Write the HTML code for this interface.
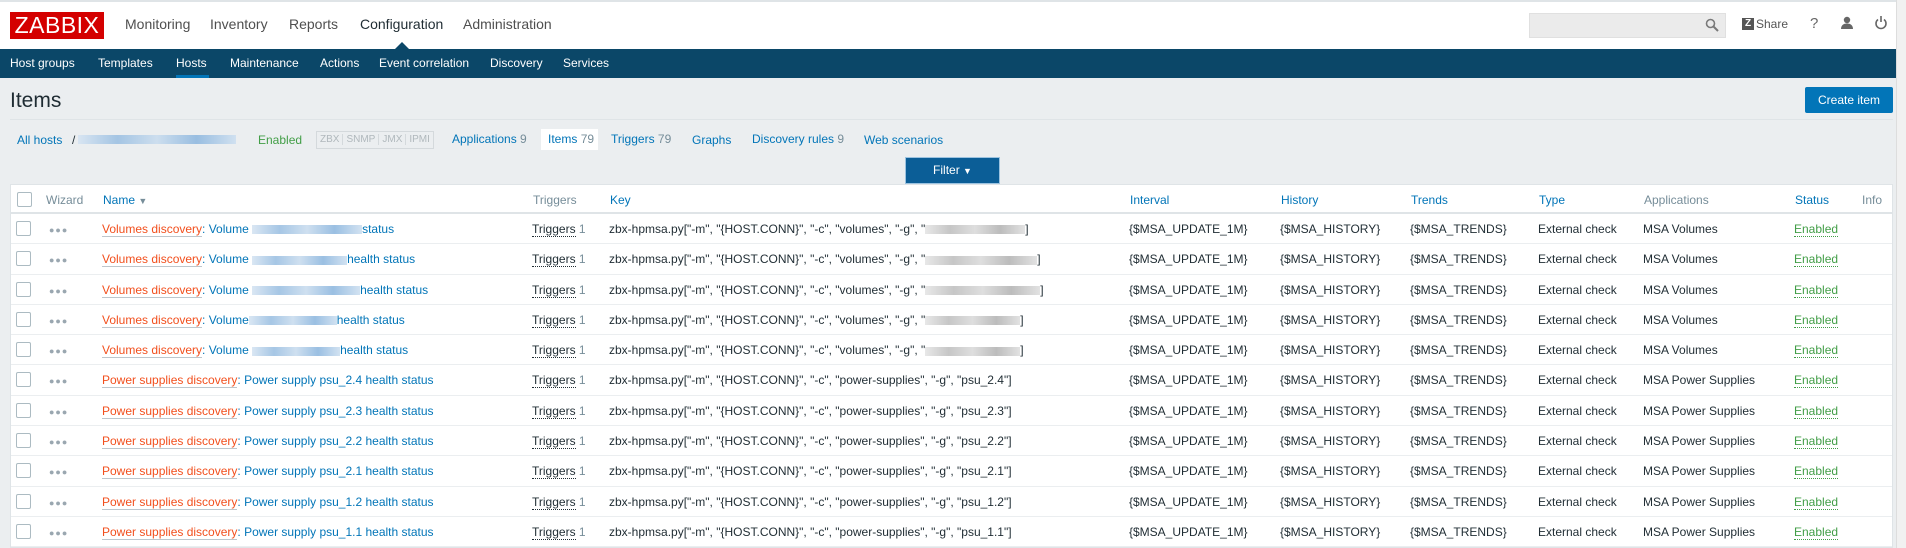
<!DOCTYPE html>
<html><head><meta charset="utf-8"><style>
*{margin:0;padding:0;box-sizing:border-box}
body{width:1906px;height:548px;overflow:hidden;background:#ebeef0;font-family:"Liberation Sans",Arial,sans-serif;font-size:12px;color:#1f2c33;position:relative}
.a{position:absolute;white-space:nowrap}
.top{position:absolute;left:0;top:0;width:1896px;height:49px;background:#fff;border-top:2px solid #dfe4e7}
.logo{left:10px;top:12px;width:94px;height:27px;background:#d40000;color:#fff;font-size:23px;line-height:27px;text-align:center;letter-spacing:.5px}
.tm{top:16px;font-size:14px;color:#4f4f4f}
.sub{position:absolute;left:0;top:49px;width:1896px;height:29px;background:#0b4768}
.sm{top:56px;color:#fff;font-size:12px}
.blue{color:#0275b8}
.gray{color:#768d99}
.tbl{position:absolute;left:10px;top:184px;width:1883px;height:364px;background:#fff;border:1px solid #dfe4e7}
.hr{position:absolute;left:0;width:1881px;border-bottom:1px solid #ebeef0}
.cb{width:15px;height:15px;border:1px solid #acbbc2;border-radius:2px;background:#fff}
.dots{color:#9aa7b0;font-size:9px;letter-spacing:1px;top:11px !important}
.or{color:#f24f1d;border-bottom:1px solid #bdc6cc}
.tr{border-bottom:1px dotted #1f2c33}
.en{color:#429e47;border-bottom:1px dotted #429e47}
.blur{display:inline-block;height:9px;vertical-align:middle;background:linear-gradient(90deg,#d6e4f2,#9cc0e2,#c9dcee,#8fb8df,#cddff0);opacity:.9}
.blurg{display:inline-block;height:9px;vertical-align:middle;background:linear-gradient(90deg,#e8e8e8,#c6c6c6,#dedede,#bcbcbc,#e2e2e2)}
</style></head><body>
<div class="top"></div>
<div class="a logo">ZABBIX</div>
<div class="a tm" style="left:125px">Monitoring</div>
<div class="a tm" style="left:210px">Inventory</div>
<div class="a tm" style="left:289px">Reports</div>
<div class="a tm" style="left:360px;color:#1f2c33">Configuration</div>
<div class="a tm" style="left:463px">Administration</div>
<div class="a" style="left:395px;top:42px;width:0;height:0;border-left:7px solid transparent;border-right:7px solid transparent;border-bottom:7px solid #0b4768"></div>
<div class="a" style="left:1529px;top:13px;width:197px;height:25px;background:#ebebeb;border:1px solid #e0e0e0"></div>
<svg class="a" style="left:1705px;top:18px" width="14" height="14" viewBox="0 0 14 14"><circle cx="5.5" cy="5.5" r="4" fill="none" stroke="#7a7a7a" stroke-width="1.6"/><path d="M8.5 8.5L13 13" stroke="#7a7a7a" stroke-width="2"/></svg>
<div class="a" style="left:1742px;top:18px;width:12px;height:12px;background:#555;color:#fff;font-size:10px;font-weight:bold;line-height:12px;text-align:center">Z</div>
<div class="a" style="left:1756px;top:17px;color:#555;font-size:12px">Share</div>
<div class="a" style="left:1810px;top:15px;color:#666;font-size:15px">?</div>
<svg class="a" style="left:1840px;top:16px" width="14" height="14" viewBox="0 0 14 14"><circle cx="7" cy="4" r="3.2" fill="#666"/><path d="M1 13c0-4 3-5.5 6-5.5s6 1.5 6 5.5z" fill="#666"/></svg>
<svg class="a" style="left:1874px;top:15px" width="14" height="15" viewBox="0 0 14 15"><path d="M4 4.5A5 5 0 1 0 10 4.5" fill="none" stroke="#666" stroke-width="1.6"/><path d="M7 1v6" stroke="#666" stroke-width="1.6"/></svg>
<div class="a" style="left:1896px;top:0;width:10px;height:548px;background:#f1f1f1;border-left:1px solid #ddd"></div>
<div class="sub"></div>
<div class="a sm" style="left:10px">Host groups</div>
<div class="a sm" style="left:98px">Templates</div>
<div class="a sm" style="left:176px">Hosts</div>
<div class="a" style="left:176px;top:75px;width:33px;height:3px;background:#0275b8"></div>
<div class="a sm" style="left:230px">Maintenance</div>
<div class="a sm" style="left:320px">Actions</div>
<div class="a sm" style="left:379px">Event correlation</div>
<div class="a sm" style="left:490px">Discovery</div>
<div class="a sm" style="left:563px">Services</div>
<div class="a" style="left:10px;top:89px;font-size:21px;color:#1f2c33">Items</div>
<div class="a" style="left:1805px;top:87px;width:88px;height:26px;background:#0275b8;color:#fff;border-radius:2px;text-align:center;line-height:26px">Create item</div>
<div class="a" style="left:10px;top:119px;width:1883px;height:1px;background:#dfe4e7"></div>
<div class="a blue" style="left:17px;top:133px">All hosts</div>
<div class="a" style="left:72px;top:133px">/</div>
<div class="a blur" style="left:78px;top:135px;width:158px"></div>
<div class="a" style="left:258px;top:133px;color:#429e47">Enabled</div>
<div class="a" style="left:316px;top:131px;height:18px;border:1px solid #d4d9dc;font-size:10px;color:#b0b8bc;line-height:16px">
<span style="padding:0 3px;border-right:1px solid #d4d9dc">ZBX</span><span style="padding:0 3px;border-right:1px solid #d4d9dc">SNMP</span><span style="padding:0 3px;border-right:1px solid #d4d9dc">JMX</span><span style="padding:0 3px">IPMI</span></div>
<div class="a blue" style="left:452px;top:132px">Applications <span class="gray">9</span></div>
<div class="a" style="left:541px;top:129px;width:57px;height:21px;background:#fff;padding:3px 7px" ><span class="blue">Items</span> <span class="gray">79</span></div>
<div class="a blue" style="left:611px;top:132px">Triggers <span class="gray">79</span></div>
<div class="a blue" style="left:692px;top:133px">Graphs</div>
<div class="a blue" style="left:752px;top:132px">Discovery rules <span class="gray">9</span></div>
<div class="a blue" style="left:864px;top:133px">Web scenarios</div>
<div class="a" style="left:905px;top:157px;width:95px;height:27px;background:#0b5e97;border:1px solid #9cc3e0;color:#fff;text-align:center;line-height:25px;z-index:2">Filter <span style="font-size:9px">▼</span></div>

<div class="tbl">
<div class="hr" style="top:0;height:29px;border-bottom:2px solid #dfe4e7"></div>
<div class="a cb" style="left:6px;top:7px"></div>
<div class="a gray" style="left:35px;top:8px">Wizard</div>
<div class="a blue" style="left:92px;top:8px">Name <span style="font-size:9px;color:#768d99">▼</span></div>
<div class="a gray" style="left:522px;top:8px">Triggers</div>
<div class="a blue" style="left:599px;top:8px">Key</div>
<div class="a blue" style="left:1119px;top:8px">Interval</div>
<div class="a blue" style="left:1270px;top:8px">History</div>
<div class="a blue" style="left:1400px;top:8px">Trends</div>
<div class="a blue" style="left:1528px;top:8px">Type</div>
<div class="a gray" style="left:1633px;top:8px">Applications</div>
<div class="a blue" style="left:1784px;top:8px">Status</div>
<div class="a gray" style="left:1851px;top:8px">Info</div>
</div>
<div class="a" style="left:11px;top:214px;width:1881px">
<div style="position:relative;height:30.3px;border-bottom:1px solid #ebeef0"><div class="a cb" style="left:5px;top:7px"></div><div class="a dots" style="left:38px;top:7px">●●●</div><div class="a" style="left:91px;top:8px"><span class="or">Volumes discovery</span><span class="blue">: Volume <span class="blur" style="width:110px"></span>status</span></div><div class="a" style="left:521px;top:8px"><span class="tr">Triggers</span> <span class="gray">1</span></div><div class="a" style="left:598px;top:8px">zbx-hpmsa.py["-m", "{HOST.CONN}", "-c", "volumes", "-g", "<span class="blurg" style="width:100px"></span>]</div><div class="a" style="left:1118px;top:8px">{$MSA_UPDATE_1M}</div><div class="a" style="left:1269px;top:8px">{$MSA_HISTORY}</div><div class="a" style="left:1399px;top:8px">{$MSA_TRENDS}</div><div class="a" style="left:1527px;top:8px">External check</div><div class="a" style="left:1632px;top:8px">MSA Volumes</div><div class="a en" style="left:1783px;top:8px">Enabled</div></div>
<div style="position:relative;height:30.3px;border-bottom:1px solid #ebeef0"><div class="a cb" style="left:5px;top:7px"></div><div class="a dots" style="left:38px;top:7px">●●●</div><div class="a" style="left:91px;top:8px"><span class="or">Volumes discovery</span><span class="blue">: Volume <span class="blur" style="width:95px"></span>health status</span></div><div class="a" style="left:521px;top:8px"><span class="tr">Triggers</span> <span class="gray">1</span></div><div class="a" style="left:598px;top:8px">zbx-hpmsa.py["-m", "{HOST.CONN}", "-c", "volumes", "-g", "<span class="blurg" style="width:112px"></span>]</div><div class="a" style="left:1118px;top:8px">{$MSA_UPDATE_1M}</div><div class="a" style="left:1269px;top:8px">{$MSA_HISTORY}</div><div class="a" style="left:1399px;top:8px">{$MSA_TRENDS}</div><div class="a" style="left:1527px;top:8px">External check</div><div class="a" style="left:1632px;top:8px">MSA Volumes</div><div class="a en" style="left:1783px;top:8px">Enabled</div></div>
<div style="position:relative;height:30.3px;border-bottom:1px solid #ebeef0"><div class="a cb" style="left:5px;top:7px"></div><div class="a dots" style="left:38px;top:7px">●●●</div><div class="a" style="left:91px;top:8px"><span class="or">Volumes discovery</span><span class="blue">: Volume <span class="blur" style="width:108px"></span>health status</span></div><div class="a" style="left:521px;top:8px"><span class="tr">Triggers</span> <span class="gray">1</span></div><div class="a" style="left:598px;top:8px">zbx-hpmsa.py["-m", "{HOST.CONN}", "-c", "volumes", "-g", "<span class="blurg" style="width:115px"></span>]</div><div class="a" style="left:1118px;top:8px">{$MSA_UPDATE_1M}</div><div class="a" style="left:1269px;top:8px">{$MSA_HISTORY}</div><div class="a" style="left:1399px;top:8px">{$MSA_TRENDS}</div><div class="a" style="left:1527px;top:8px">External check</div><div class="a" style="left:1632px;top:8px">MSA Volumes</div><div class="a en" style="left:1783px;top:8px">Enabled</div></div>
<div style="position:relative;height:30.3px;border-bottom:1px solid #ebeef0"><div class="a cb" style="left:5px;top:7px"></div><div class="a dots" style="left:38px;top:7px">●●●</div><div class="a" style="left:91px;top:8px"><span class="or">Volumes discovery</span><span class="blue">: Volume<span class="blur" style="width:88px"></span>health status</span></div><div class="a" style="left:521px;top:8px"><span class="tr">Triggers</span> <span class="gray">1</span></div><div class="a" style="left:598px;top:8px">zbx-hpmsa.py["-m", "{HOST.CONN}", "-c", "volumes", "-g", "<span class="blurg" style="width:95px"></span>]</div><div class="a" style="left:1118px;top:8px">{$MSA_UPDATE_1M}</div><div class="a" style="left:1269px;top:8px">{$MSA_HISTORY}</div><div class="a" style="left:1399px;top:8px">{$MSA_TRENDS}</div><div class="a" style="left:1527px;top:8px">External check</div><div class="a" style="left:1632px;top:8px">MSA Volumes</div><div class="a en" style="left:1783px;top:8px">Enabled</div></div>
<div style="position:relative;height:30.3px;border-bottom:1px solid #ebeef0"><div class="a cb" style="left:5px;top:7px"></div><div class="a dots" style="left:38px;top:7px">●●●</div><div class="a" style="left:91px;top:8px"><span class="or">Volumes discovery</span><span class="blue">: Volume <span class="blur" style="width:88px"></span>health status</span></div><div class="a" style="left:521px;top:8px"><span class="tr">Triggers</span> <span class="gray">1</span></div><div class="a" style="left:598px;top:8px">zbx-hpmsa.py["-m", "{HOST.CONN}", "-c", "volumes", "-g", "<span class="blurg" style="width:95px"></span>]</div><div class="a" style="left:1118px;top:8px">{$MSA_UPDATE_1M}</div><div class="a" style="left:1269px;top:8px">{$MSA_HISTORY}</div><div class="a" style="left:1399px;top:8px">{$MSA_TRENDS}</div><div class="a" style="left:1527px;top:8px">External check</div><div class="a" style="left:1632px;top:8px">MSA Volumes</div><div class="a en" style="left:1783px;top:8px">Enabled</div></div>
<div style="position:relative;height:30.3px;border-bottom:1px solid #ebeef0"><div class="a cb" style="left:5px;top:7px"></div><div class="a dots" style="left:38px;top:7px">●●●</div><div class="a" style="left:91px;top:8px"><span class="or">Power supplies discovery</span><span class="blue">: Power supply psu_2.4 health status</span></div><div class="a" style="left:521px;top:8px"><span class="tr">Triggers</span> <span class="gray">1</span></div><div class="a" style="left:598px;top:8px">zbx-hpmsa.py["-m", "{HOST.CONN}", "-c", "power-supplies", "-g", "psu_2.4"]</div><div class="a" style="left:1118px;top:8px">{$MSA_UPDATE_1M}</div><div class="a" style="left:1269px;top:8px">{$MSA_HISTORY}</div><div class="a" style="left:1399px;top:8px">{$MSA_TRENDS}</div><div class="a" style="left:1527px;top:8px">External check</div><div class="a" style="left:1632px;top:8px">MSA Power Supplies</div><div class="a en" style="left:1783px;top:8px">Enabled</div></div>
<div style="position:relative;height:30.3px;border-bottom:1px solid #ebeef0"><div class="a cb" style="left:5px;top:7px"></div><div class="a dots" style="left:38px;top:7px">●●●</div><div class="a" style="left:91px;top:8px"><span class="or">Power supplies discovery</span><span class="blue">: Power supply psu_2.3 health status</span></div><div class="a" style="left:521px;top:8px"><span class="tr">Triggers</span> <span class="gray">1</span></div><div class="a" style="left:598px;top:8px">zbx-hpmsa.py["-m", "{HOST.CONN}", "-c", "power-supplies", "-g", "psu_2.3"]</div><div class="a" style="left:1118px;top:8px">{$MSA_UPDATE_1M}</div><div class="a" style="left:1269px;top:8px">{$MSA_HISTORY}</div><div class="a" style="left:1399px;top:8px">{$MSA_TRENDS}</div><div class="a" style="left:1527px;top:8px">External check</div><div class="a" style="left:1632px;top:8px">MSA Power Supplies</div><div class="a en" style="left:1783px;top:8px">Enabled</div></div>
<div style="position:relative;height:30.3px;border-bottom:1px solid #ebeef0"><div class="a cb" style="left:5px;top:7px"></div><div class="a dots" style="left:38px;top:7px">●●●</div><div class="a" style="left:91px;top:8px"><span class="or">Power supplies discovery</span><span class="blue">: Power supply psu_2.2 health status</span></div><div class="a" style="left:521px;top:8px"><span class="tr">Triggers</span> <span class="gray">1</span></div><div class="a" style="left:598px;top:8px">zbx-hpmsa.py["-m", "{HOST.CONN}", "-c", "power-supplies", "-g", "psu_2.2"]</div><div class="a" style="left:1118px;top:8px">{$MSA_UPDATE_1M}</div><div class="a" style="left:1269px;top:8px">{$MSA_HISTORY}</div><div class="a" style="left:1399px;top:8px">{$MSA_TRENDS}</div><div class="a" style="left:1527px;top:8px">External check</div><div class="a" style="left:1632px;top:8px">MSA Power Supplies</div><div class="a en" style="left:1783px;top:8px">Enabled</div></div>
<div style="position:relative;height:30.3px;border-bottom:1px solid #ebeef0"><div class="a cb" style="left:5px;top:7px"></div><div class="a dots" style="left:38px;top:7px">●●●</div><div class="a" style="left:91px;top:8px"><span class="or">Power supplies discovery</span><span class="blue">: Power supply psu_2.1 health status</span></div><div class="a" style="left:521px;top:8px"><span class="tr">Triggers</span> <span class="gray">1</span></div><div class="a" style="left:598px;top:8px">zbx-hpmsa.py["-m", "{HOST.CONN}", "-c", "power-supplies", "-g", "psu_2.1"]</div><div class="a" style="left:1118px;top:8px">{$MSA_UPDATE_1M}</div><div class="a" style="left:1269px;top:8px">{$MSA_HISTORY}</div><div class="a" style="left:1399px;top:8px">{$MSA_TRENDS}</div><div class="a" style="left:1527px;top:8px">External check</div><div class="a" style="left:1632px;top:8px">MSA Power Supplies</div><div class="a en" style="left:1783px;top:8px">Enabled</div></div>
<div style="position:relative;height:30.3px;border-bottom:1px solid #ebeef0"><div class="a cb" style="left:5px;top:7px"></div><div class="a dots" style="left:38px;top:7px">●●●</div><div class="a" style="left:91px;top:8px"><span class="or">Power supplies discovery</span><span class="blue">: Power supply psu_1.2 health status</span></div><div class="a" style="left:521px;top:8px"><span class="tr">Triggers</span> <span class="gray">1</span></div><div class="a" style="left:598px;top:8px">zbx-hpmsa.py["-m", "{HOST.CONN}", "-c", "power-supplies", "-g", "psu_1.2"]</div><div class="a" style="left:1118px;top:8px">{$MSA_UPDATE_1M}</div><div class="a" style="left:1269px;top:8px">{$MSA_HISTORY}</div><div class="a" style="left:1399px;top:8px">{$MSA_TRENDS}</div><div class="a" style="left:1527px;top:8px">External check</div><div class="a" style="left:1632px;top:8px">MSA Power Supplies</div><div class="a en" style="left:1783px;top:8px">Enabled</div></div>
<div style="position:relative;height:30.3px;border-bottom:1px solid #ebeef0"><div class="a cb" style="left:5px;top:7px"></div><div class="a dots" style="left:38px;top:7px">●●●</div><div class="a" style="left:91px;top:8px"><span class="or">Power supplies discovery</span><span class="blue">: Power supply psu_1.1 health status</span></div><div class="a" style="left:521px;top:8px"><span class="tr">Triggers</span> <span class="gray">1</span></div><div class="a" style="left:598px;top:8px">zbx-hpmsa.py["-m", "{HOST.CONN}", "-c", "power-supplies", "-g", "psu_1.1"]</div><div class="a" style="left:1118px;top:8px">{$MSA_UPDATE_1M}</div><div class="a" style="left:1269px;top:8px">{$MSA_HISTORY}</div><div class="a" style="left:1399px;top:8px">{$MSA_TRENDS}</div><div class="a" style="left:1527px;top:8px">External check</div><div class="a" style="left:1632px;top:8px">MSA Power Supplies</div><div class="a en" style="left:1783px;top:8px">Enabled</div></div>
</div>
</body></html>
